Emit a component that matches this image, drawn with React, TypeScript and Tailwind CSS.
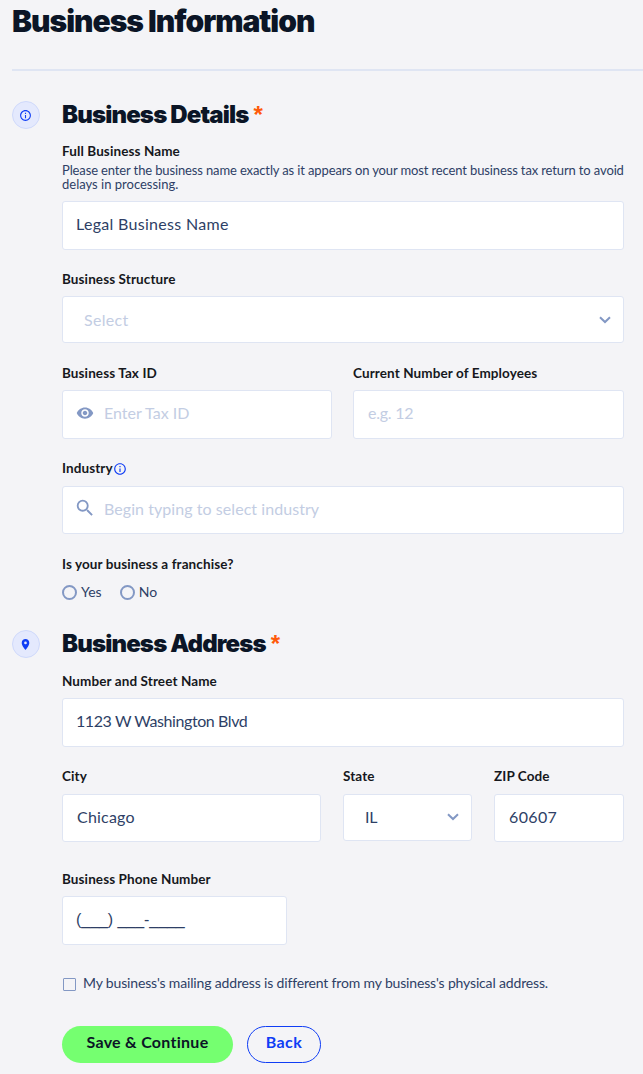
import { useState } from 'react';
import type { ReactNode } from 'react';
import { MdInfoOutline, MdLocationOn, MdSearch, MdVisibility } from 'react-icons/md';

const LABEL = 'block h-[18px] text-[13.5px] leading-[18px] font-bold tracking-[0.1px] text-[#16181d] whitespace-nowrap';
const INPUT =
  'w-full rounded-[3px] border border-[#dfe5f3] bg-white text-base text-[#2e3f66] placeholder:text-[#c3cde3] placeholder:opacity-100 outline-none';

interface FieldProps {
  label: string;
  icon?: ReactNode;
  className?: string;
  children: ReactNode;
}

function Field({ label, icon, className = '', children }: FieldProps) {
  return (
    <div className={className}>
      <div className="flex items-center">
        <label className={LABEL}>{label}</label>
        {icon}
      </div>
      {children}
    </div>
  );
}

function SectionHeader({ icon, title }: { icon: ReactNode; title: string }) {
  return (
    <div className="flex items-center h-7">
      <div className="flex size-7 items-center justify-center rounded-full border border-[#cfd9fb] bg-[#e4e9fd] pr-px text-[#0f3df5]">
        {icon}
      </div>
      <h2 className="ml-[22px] flex font-['Inter'] text-2xl leading-7 font-black tracking-[-0.85px] text-[#0b1526] whitespace-nowrap">
        {title}
        <span className="ml-[5px] font-['Liberation_Sans'] font-bold text-[#ff5a0a]">*</span>
      </h2>
    </div>
  );
}

function Chevron() {
  return (
    <svg width="12" height="8" viewBox="0 0 12 8" fill="none" stroke="#8398c4" strokeWidth="2">
      <path d="M1 1.2 6 6l5-4.8" />
    </svg>
  );
}

interface RadioProps {
  label: string;
  checked: boolean;
  onChange: () => void;
}

function Radio({ label, checked, onChange }: RadioProps) {
  return (
    <label className="flex items-center gap-1 text-[14px] leading-[18px] text-[#2e3f66] cursor-pointer">
      <input type="radio" name="franchise" checked={checked} onChange={onChange} className="peer sr-only" />
      <span className="size-[15px] rounded-full border-2 border-[#8398c4] peer-checked:border-[5px]" />
      {label}
    </label>
  );
}

export default function App() {
  const [franchise, setFranchise] = useState('');
  const [mailing, setMailing] = useState(false);

  return (
    <div className="h-[1074px] overflow-hidden bg-[#f4f4f7] pl-3 font-['Lato',sans-serif]">
      <h1 className="h-[69px] pt-px font-['Inter'] text-[30px] leading-10 font-black tracking-[-1px] text-[#0b1526] whitespace-nowrap">
        Business Information
      </h1>
      <hr className="border-t-2 border-[#dfe5f3]" />

      <section className="mt-[30px]">
        <SectionHeader icon={<MdInfoOutline size={13} />} title="Business Details" />
        <div className="ml-[50px] mr-[19px]">
          <Field label="Full Business Name" className="mt-[13px]">
            <p className="mt-[3px] h-[38px] text-[13px] leading-[14px] tracking-[-0.13px] text-[#2e3f66] whitespace-nowrap">
              Please enter the business name exactly as it appears on your most recent business tax return to avoid
              <br />
              <span className="tracking-normal">delays in processing.</span>
            </p>
            <input
              className={`${INPUT} h-[49px] px-[13px] pb-1 tracking-[0.3px]`}
              defaultValue="Legal Business Name"
            />
          </Field>

          <Field label="Business Structure" className="mt-5">
            <button
              type="button"
              className={`${INPUT} mt-2 flex h-[47px] items-center justify-between pl-[21px] pr-3`}
            >
              <span className="tracking-[0.3px] text-[#c3cde3]">Select</span>
              <Chevron />
            </button>
          </Field>

          <div className="mt-[21px] grid grid-cols-[270px_271px] gap-[21px]">
            <Field label="Business Tax ID">
              <div className={`${INPUT} mt-2 flex h-[49px] items-center pl-[13px] pb-[3px]`}>
                <MdVisibility size={18} color="#8398c4" />
                <input
                  className="ml-[10px] w-40 outline-none placeholder:text-[#c3cde3]"
                  placeholder="Enter Tax ID"
                />
              </div>
            </Field>
            <Field label="Current Number of Employees">
              <input
                className={`${INPUT} mt-2 h-[49px] px-[14px] pb-1 tracking-[-0.25px]`}
                placeholder="e.g. 12"
              />
            </Field>
          </div>

          <Field
            label="Industry"
            className="mt-5"
            icon={<MdInfoOutline size={14} color="#0f3df5" className="relative top-px" />}
          >
            <div className={`${INPUT} mt-[9px] flex h-12 items-center pl-[11px] pb-[2px]`}>
              <MdSearch size={22} color="#8398c4" className="mb-[2px]" />
              <input
                className="ml-2 w-80 outline-none tracking-[0.06px] placeholder:text-[#c3cde3]"
                placeholder="Begin typing to select industry"
              />
            </div>
          </Field>

          <Field label="Is your business a franchise?" className="mt-[21px]">
            <div className="mt-[10px] flex gap-[18px]">
              <Radio label="Yes" checked={franchise === 'yes'} onChange={() => setFranchise('yes')} />
              <Radio label="No" checked={franchise === 'no'} onChange={() => setFranchise('no')} />
            </div>
          </Field>
        </div>
      </section>

      <section className="mt-[29px]">
        <SectionHeader icon={<MdLocationOn size={13} />} title="Business Address" />
        <div className="ml-[50px] mr-[19px]">
          <Field label="Number and Street Name" className="mt-[14px]">
            <input
              className={`${INPUT} mt-2 h-[49px] px-[13px] pb-1 tracking-[-0.42px]`}
              defaultValue="1123 W Washington Blvd"
            />
          </Field>

          <div className="mt-5 grid grid-cols-[259px_129px_130px] gap-[22px]">
            <Field label="City">
              <input
                className={`${INPUT} mt-[9px] h-12 px-[14px] pb-[3px] tracking-[0.2px]`}
                defaultValue="Chicago"
              />
            </Field>
            <Field label="State">
              <button
                type="button"
                className={`${INPUT} mt-[9px] flex h-[47px] items-center justify-between pl-[21px] pr-3 pb-[2px]`}
              >
                <span className="pt-px tracking-[-0.3px]">IL</span>
                <Chevron />
              </button>
            </Field>
            <Field label="ZIP Code">
              <input
                className={`${INPUT} mt-[9px] h-12 px-[14px] pb-[3px] tracking-[0.35px]`}
                defaultValue="60607"
              />
            </Field>
          </div>

          <Field label="Business Phone Number" className="mt-7">
            <input
              className={`${INPUT} mt-2 h-[49px] max-w-[225px] px-[13px] pb-[2px] tracking-[-0.05px] font-['Liberation_Sans',sans-serif]`}
              defaultValue="(___) ___-____"
            />
          </Field>

          <label className="mt-[30px] flex h-[18px] items-center gap-[7px] text-[14px] leading-[18px] tracking-[-0.16px] text-[#2e3f66] whitespace-nowrap cursor-pointer">
            <input
              type="checkbox"
              checked={mailing}
              onChange={(e) => setMailing(e.target.checked)}
              className="ml-px size-[13px] appearance-none rounded-[1px] border border-[#8398c4] checked:bg-[#0f3df5]"
            />
            <span className="pb-[2px]">
              My business's mailing address is different from my business's physical address.
            </span>
          </label>

          <div className="mt-[33px] flex gap-[14px]">
            <button className="h-[37px] w-[171px] rounded-full bg-[#75ff70] pb-[5px] font-bold tracking-[0.28px] text-[#0b1526]">
              Save & Continue
            </button>
            <button className="h-[37px] w-[74px] rounded-full border border-[#0f3df5] pb-[5px] font-bold tracking-[0.4px] text-[#0f3df5]">
              Back
            </button>
          </div>
        </div>
      </section>
    </div>
  );
}
